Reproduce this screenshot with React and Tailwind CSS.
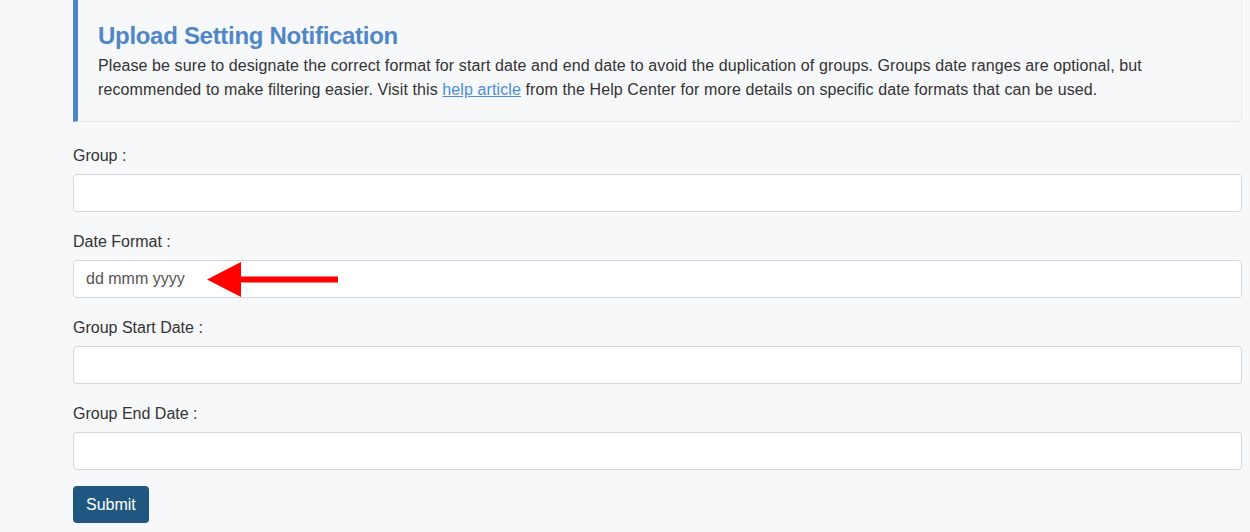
const fields = [
  { label: 'Group :', value: '' },
  { label: 'Date Format :', value: 'dd mmm yyyy', arrow: true },
  { label: 'Group Start Date :', value: '' },
  { label: 'Group End Date :', value: '' },
];

const Arrow = () => (
  <svg
    className="absolute left-[134px] top-[2px] pointer-events-none"
    width="134"
    height="35"
    viewBox="0 0 134 35"
  >
    <polygon points="0,17.5 34,0 34,35" fill="#ff0000" />
    <rect x="33" y="14.5" width="98" height="6" fill="#ff0000" />
  </svg>
);

export default function App() {
  return (
    <div
      className="min-h-screen bg-[#f7f8fa] text-[#333] pl-[73px] pr-[8px]"
      style={{ fontFamily: '"Liberation Sans", Arial, sans-serif' }}
    >
      {/* Notice */}
      <div className="border-l-[5px] border-l-[#4f86c6] border-b border-r border-[#e7e9ec] rounded-br-[4px] pl-[20px] pr-[20px] pt-[21px] pb-[19px]">
        <h2 className="text-[24px] leading-[29px] font-bold tracking-[-0.3px] text-[#4f86c6] mb-[4px]">
          Upload Setting Notification
        </h2>
        <p className="text-[16px] leading-[24px] tracking-[0.1px]">
          Please be sure to designate the correct format for start date and end date to avoid the duplication of groups. Groups date ranges are optional, but recommended to make filtering easier. Visit this{' '}
          <a href="#" className="text-[#4a8fd6] underline">help article</a>{' '}
          from the Help Center for more details on specific date formats that can be used.
        </p>
      </div>

      {/* Form */}
      <form className="pt-[22px]" onSubmit={(e) => e.preventDefault()}>
        {fields.map((f) => (
          <div key={f.label} className="mb-[18px]">
            <label className="block text-[16px] leading-[24px] mb-[6px]">{f.label}</label>
            <div className="relative">
              <input
                type="text"
                defaultValue={f.value}
                className="w-full h-[38px] bg-white border border-[#d3d6da] rounded-[4px] px-[12px] text-[16px] text-[#555] outline-none"
              />
              {f.arrow && <Arrow />}
            </div>
          </div>
        ))}
        <button
          type="submit"
          className="-mt-[2px] h-[37px] px-[13px] rounded-[4px] bg-[#1f5780] text-white text-[16px]"
        >
          Submit
        </button>
      </form>
    </div>
  );
}
